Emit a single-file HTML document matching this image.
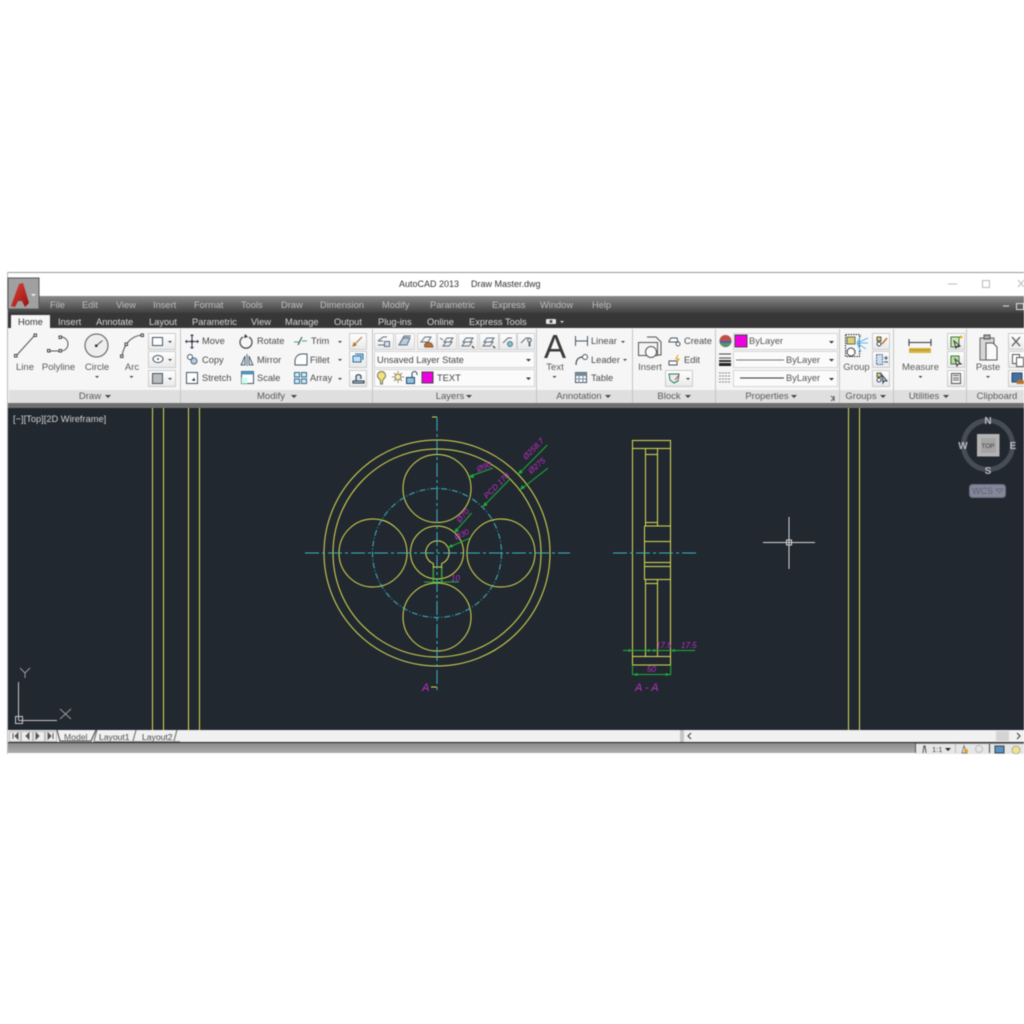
<!DOCTYPE html>
<html><head><meta charset="utf-8">
<style>
html,body{margin:0;padding:0;background:#fff;width:1024px;height:1024px;overflow:hidden}
svg{display:block;position:absolute;left:0;top:0;filter:blur(0.4px)}
text{font-family:"Liberation Sans",sans-serif;font-size:9.3px;fill:#4a4a4a}
.m text{fill:#bdbdbd}
.t text{fill:#d8d8d8}
.p text{fill:#5a5a5a;font-size:9.5px;text-anchor:middle}
.i{fill:none;stroke:#4a5560;stroke-width:1}
.y{fill:none;stroke:#dcdc50;stroke-width:1}
.c{fill:none;stroke:#3db4bd;stroke-width:1}
.g{fill:none;stroke:#1fae3c;stroke-width:1}
.d text{fill:#c22fc9;font-style:italic;font-size:8px}
</style></head><body>
<svg width="1024" height="1024" viewBox="0 0 1024 1024" xmlns="http://www.w3.org/2000/svg">
<defs>
<linearGradient id="mb" x1="0" y1="0" x2="0" y2="1"><stop offset="0" stop-color="#8a8a8a"/><stop offset="1" stop-color="#3a3a3a"/></linearGradient>
<linearGradient id="st" x1="0" y1="0" x2="0" y2="1"><stop offset="0" stop-color="#8a8a8a"/><stop offset="1" stop-color="#adadad"/></linearGradient>
<linearGradient id="btn" x1="0" y1="0" x2="0" y2="1"><stop offset="0" stop-color="#fff"/><stop offset="1" stop-color="#e9e9e9"/></linearGradient>
<linearGradient id="ar" x1="0" y1="0" x2="1" y2="1"><stop offset="0" stop-color="#e8403a"/><stop offset="1" stop-color="#8e1512"/></linearGradient>
</defs>
<!-- window -->
<rect x="7" y="272" width="1017" height="482" fill="#fff"/>
<rect x="7" y="272" width="1017" height="1" fill="#999"/>
<rect x="7" y="272" width="1" height="482" fill="#bbb"/>
<rect x="8" y="296" width="1016" height="18" fill="url(#mb)"/>
<rect x="8" y="313" width="1016" height="15" fill="#373737"/>
<rect x="8" y="328" width="1016" height="76" fill="#f6f6f6"/>
<rect x="9" y="390" width="1015" height="13" fill="#dfdfdf"/>
<rect x="8" y="403" width="1016" height="5" fill="#6e6e6e"/>
<rect x="8" y="408" width="1016" height="322" fill="#212830"/>
<rect x="8" y="730" width="1016" height="12" fill="#f1f1f1"/>
<rect x="8" y="742" width="1016" height="1" fill="#222"/>
<rect x="8" y="743" width="1016" height="10" fill="url(#st)"/>

<!-- app button -->
<rect x="8" y="278" width="31" height="31" fill="#a0a0a0" stroke="#555"/>
<path d="M11 306 L19 284 L23 283 L29 303 L25 307 L22 301 L18 301 L15 307Z" fill="url(#ar)"/>
<path d="M31 294h5l-2.500 2.500z" fill="#eee"/>

<!-- title -->
<text x="399" y="287" style="font-size:9px;fill:#333">AutoCAD 2013</text>
<text x="471" y="287" style="font-size:9px;fill:#333">Draw Master.dwg</text>
<path d="M948 284h9" stroke="#bbb" fill="none"/>
<rect x="982.500" y="280.500" width="7" height="7" fill="none" stroke="#bbb"/>
<path d="M1018 280l6 7M1024 280l-6 7" stroke="#bbb" fill="none"/>
<path d="M1003 306h6" stroke="#ddd"/>
<rect x="1016.500" y="303.500" width="7" height="6" fill="none" stroke="#ddd"/>

<!-- menu -->
<g class="m">
<text x="50" y="308">File</text><text x="82" y="308">Edit</text><text x="116" y="308">View</text><text x="153" y="308">Insert</text><text x="194" y="308">Format</text><text x="241" y="308">Tools</text><text x="281" y="308">Draw</text><text x="320" y="308">Dimension</text><text x="382" y="308">Modify</text><text x="430" y="308">Parametric</text><text x="492" y="308">Express</text><text x="540" y="308">Window</text><text x="592" y="308">Help</text>
</g>
<!-- tabs -->
<rect x="11" y="315" width="39" height="14" fill="#f6f6f6"/>
<text x="18" y="325" style="fill:#333">Home</text>
<g class="t">
<text x="58" y="325">Insert</text><text x="96" y="325">Annotate</text><text x="149" y="325">Layout</text><text x="192" y="325">Parametric</text><text x="251" y="325">View</text><text x="285" y="325">Manage</text><text x="334" y="325">Output</text><text x="378" y="325">Plug-ins</text><text x="427" y="325">Online</text><text x="469" y="325">Express Tools</text>
</g>
<rect x="546" y="319" width="10" height="5" rx="1" fill="#e6e6e6"/><circle cx="551" cy="321.500" r="1.500" fill="#444"/>
<path d="M560 321h4l-2 2z" fill="#ddd"/>

<!-- panel separators -->
<g fill="#c4c4c4">
<rect x="180" y="329" width="1" height="74"/><rect x="372" y="329" width="1" height="74"/><rect x="536" y="329" width="1" height="74"/><rect x="632" y="329" width="1" height="74"/><rect x="715" y="329" width="1" height="74"/><rect x="839" y="329" width="1" height="74"/><rect x="893" y="329" width="1" height="74"/><rect x="966" y="329" width="1" height="74"/>
</g>

<!-- Draw panel -->
<path class="i" d="M16 356L35 335" style="stroke:#555"/><rect x="14.500" y="354.500" width="2.500" height="2.500" fill="#fff" stroke="#444"/><rect x="34" y="334" width="2.500" height="2.500" fill="#fff" stroke="#444"/>
<path class="i" d="M49 351h12a7 7 0 0 0 0-14" style="stroke:#555"/><rect x="47.500" y="349.500" width="2.500" height="2.500" fill="#fff" stroke="#444"/><rect x="59" y="349.500" width="2.500" height="2.500" fill="#fff" stroke="#444"/><rect x="59" y="336" width="2.500" height="2.500" fill="#fff" stroke="#444"/>
<circle cx="96.500" cy="345.500" r="11.500" fill="#eee" stroke="#555"/><path d="M96.500 345.500l6-5" stroke="#555" fill="none"/><rect x="95" y="344.500" width="2.500" height="2.500" fill="#333"/>
<path class="i" d="M122 356C124 344 131 336 142 335" style="stroke:#555"/><rect x="120.500" y="355" width="2.500" height="2.500" fill="#fff" stroke="#444"/><rect x="141" y="334" width="2.500" height="2.500" fill="#fff" stroke="#444"/><rect x="125" y="343" width="2.500" height="2.500" fill="#fff" stroke="#444"/>
<g class="p"><text x="25" y="370">Line</text><text x="58.500" y="370">Polyline</text><text x="97" y="370">Circle</text><text x="132" y="370">Arc</text><text x="90" y="399">Draw</text></g>
<path d="M95 376h4l-2 2zM129.500 376h4l-2 2zM105 395h6l-3 3z" fill="#444"/>
<g fill="url(#btn)" stroke="#ccc"><rect x="148.500" y="333.500" width="27" height="16"/><rect x="148.500" y="351.500" width="27" height="16"/><rect x="148.500" y="370.500" width="27" height="16"/></g>
<rect x="152.500" y="337.500" width="10" height="8" fill="#fff" stroke="#456"/>
<ellipse cx="158" cy="359" rx="5" ry="3.500" fill="#fff" stroke="#456"/><circle cx="158" cy="359" r="1" fill="#456"/>
<rect x="152.500" y="373.500" width="10" height="10" fill="#bbb" stroke="#456"/>
<path d="M168 341h4l-2 2zM168 359h4l-2 2zM168 378h4l-2 2z" fill="#444"/>
<!-- Modify panel -->
<path d="M192 336v11M186.500 341.500h11" stroke="#334" fill="none"/><circle cx="192" cy="341.500" r="1.500" fill="#345"/><path d="M192 334l2 2h-4zM192 349l2-2h-4zM185 341.500l2-2v4zM199 341.500l-2-2v4z" fill="#334"/>
<circle cx="190" cy="357" r="2.500" fill="#fff" stroke="#456"/><circle cx="194" cy="361" r="3" fill="#bcd" stroke="#468"/>
<rect x="186.500" y="372.500" width="11" height="11" fill="#fff" stroke="#456"/><path d="M192 380l3 0m-1-2v3" stroke="#222" fill="none"/>
<path d="M243 337a6 6 0 1 0 6 0" fill="none" stroke="#444" stroke-width="1.200"/><path d="M245 334l3 3-4 1z" fill="#333"/>
<path d="M247 354v12M245 356l-4 9h4zM249 356l4 9h-4z" fill="#cfe0e8" stroke="#345" stroke-width=".8"/>
<rect x="241.500" y="371.500" width="12" height="12" fill="#fff" stroke="#456"/><rect x="241.500" y="371.500" width="12" height="3" fill="#4a98c0"/><rect x="241.500" y="377.500" width="6" height="6" fill="#cfe"/>
<path d="M294 342h5M302 341h5" stroke="#4a7" fill="none"/><path d="M298 345l4-8" stroke="#345" fill="none"/>
<path d="M295 365v-4a7 7 0 0 1 7-7h5v11z" fill="#fff" stroke="#456"/>
<g fill="#d8e8f0" stroke="#2c6a90"><rect x="294.500" y="372.500" width="5" height="4.500"/><rect x="301.500" y="372.500" width="5" height="4.500"/><rect x="294.500" y="379" width="5" height="4.500"/><rect x="301.500" y="379" width="5" height="4.500"/></g>
<g style="fill:#555"><text x="202" y="344">Move</text><text x="202" y="363">Copy</text><text x="202" y="381">Stretch</text><text x="257" y="344">Rotate</text><text x="257" y="363">Mirror</text><text x="257" y="381">Scale</text><text x="311" y="344">Trim</text><text x="310" y="363">Fillet</text><text x="310" y="381">Array</text></g>
<path d="M338 341h4l-2 2zM338 359h4l-2 2zM338 378h4l-2 2zM291 395h6l-3 3z" fill="#444"/>
<g class="p"><text x="271" y="399">Modify</text></g>
<g fill="url(#btn)" stroke="#ccc"><rect x="349.500" y="333.500" width="17" height="16"/><rect x="349.500" y="351.500" width="17" height="16"/><rect x="349.500" y="370.500" width="17" height="16"/></g>
<path d="M353 346l9-9M353 346l3-1-2-2z" stroke="#b07030" fill="#c33"/>
<path d="M353 356h8v6h-8zM355 354h8v6" fill="#cde" stroke="#2070a0"/>
<path d="M353 381h11v2h-11zM356 381v-5a3 3 0 0 1 5 0v3" fill="#cde" stroke="#234"/>

<!-- Layers panel -->
<g fill="url(#btn)" stroke="#d2d2d2">
<rect x="374.500" y="333.500" width="19" height="16"/><rect x="395.500" y="333.500" width="19" height="16"/><rect x="417.500" y="333.500" width="19" height="16"/><rect x="437.500" y="333.500" width="19" height="16"/><rect x="458.500" y="333.500" width="19" height="16"/><rect x="479.500" y="333.500" width="19" height="16"/><rect x="499.500" y="333.500" width="17" height="16"/><rect x="517.500" y="333.500" width="17" height="16"/>
</g>
<g fill="none" stroke="#5f6e7c">
<path d="M378 341l5-4h4M378 345h6M378 341h5"/><rect x="384.500" y="341.500" width="5" height="5" fill="#dde"/>
<path d="M399 345l4-7h7l-3 7zM400 343l4-7h7" fill="#bcd"/>
<path d="M421 342l4-5h6l-3 5z"/><path d="M425 347a4 3 0 0 1 7-3l1 3z" fill="#b8722c" stroke="#854"/>
<path d="M444 342l3-4h6l-3 4zM443 346l3-4h6l-3 4zM440 338l3 2" />
<path d="M463 342l3-4h7l-3 4zM462 346l3-4h7l-3 4z"/><path d="M472 346l2 2" stroke="#111"/>
<path d="M484 342l3-4h7l-3 4zM483 346l3-4h7l-3 4z"/><path d="M493 346l2 2" stroke="#111"/>
<path d="M503 343l5-5h4"/><circle cx="510" cy="344" r="2.500" fill="#7cc"/>
<path d="M521 343l5-5h4"/><path d="M529 342a2 2 0 1 1 1 0v4h-1z" fill="#ddd"/>
</g>
<rect x="374.500" y="351.500" width="160" height="16" fill="#fbfbfb" stroke="#d4d4d4"/>
<rect x="374.500" y="369.500" width="160" height="17" fill="#fbfbfb" stroke="#d4d4d4"/>
<text x="377" y="363" style="fill:#444">Unsaved Layer State</text>
<text x="437" y="381" style="fill:#444">TEXT</text>
<path d="M526 359h5l-2.500 2.500zM526 377.500h5l-2.500 2.500z" fill="#333"/>
<path d="M380.500 384v-3l-1-2a4 4 0 1 1 4 0l-1 2v3z" fill="#f3e27a" stroke="#776"/>
<circle cx="398" cy="377" r="3" fill="#f3eeb0" stroke="#875"/><path d="M398 371v2M398 381v2M392 377h2M402 377h2M394 373l1.500 1.500M402 373l-1.500 1.500M394 381l1.500-1.500M402 381l-1.500-1.500" stroke="#986" fill="none"/>
<rect x="406.500" y="377.500" width="8" height="6" fill="#8ec4e0" stroke="#246"/><path d="M412 377v-3a2.500 2.500 0 0 1 5 0v1" fill="none" stroke="#246"/>
<rect x="422" y="372" width="11" height="11" fill="#f000e0" stroke="#444"/>
<g class="p"><text x="450" y="399">Layers</text></g><path d="M466 395h6l-3 3z" fill="#444"/>

<!-- Annotation -->
<text x="544" y="358" style="font-size:33px;fill:#3a3a3a">A</text>
<g class="p"><text x="555" y="370">Text</text><text x="579" y="399">Annotation</text></g>
<path d="M552.500 376h4l-2 2zM605 395h6l-3 3zM621 341h4l-2 2zM623 359h4l-2 2z" fill="#444"/>
<path d="M575.500 336v10M587.500 336v10M576 341h11" stroke="#456" fill="none"/>
<path d="M576 365c0-6 3-8 7-8" stroke="#333" fill="none"/><circle cx="585" cy="357" r="2.500" fill="#fff" stroke="#456"/>
<rect x="575.500" y="372.500" width="11" height="10" fill="#fff" stroke="#456"/><path d="M575.500 375.500h11M575.500 379h11M579 375v8M583 375v8" stroke="#789" fill="none"/><rect x="575.500" y="372.500" width="11" height="2.500" fill="#789"/>
<g style="fill:#555"><text x="591" y="344">Linear</text><text x="591" y="363">Leader</text><text x="591" y="381">Table</text></g>

<!-- Block -->
<path d="M647 337h9l5 5v13h-5" fill="#f4f4f4" stroke="#555"/>
<rect x="638.500" y="342.500" width="19" height="13" fill="#f4f4f4" stroke="#555"/><circle cx="651" cy="352" r="5.500" fill="#fafafa" stroke="#555"/>
<path d="M669 341l2-3h6l1 4h-9z" fill="#fff" stroke="#456"/><circle cx="678" cy="344" r="2" fill="#fff" stroke="#456"/>
<path d="M669 361h8v4h-8z" fill="#fff" stroke="#456"/><path d="M678 355l-2 4h3l-2 3" stroke="#e0a010" fill="none"/>
<rect x="665.500" y="370.500" width="27" height="16" fill="url(#btn)" stroke="#ccc"/>
<path d="M669 374h10l-1 7-4 2-4-3z" fill="#e8eef0" stroke="#2a7a5a"/><path d="M675 380l4-5" stroke="#c33" fill="none"/><path d="M686 378h4l-2 2zM685 395h6l-3 3z" fill="#444"/>
<g style="fill:#555"><text x="684" y="344">Create</text><text x="684" y="363">Edit</text></g>
<g class="p"><text x="650" y="370">Insert</text><text x="669" y="399">Block</text></g>

<!-- Properties -->
<circle cx="725.500" cy="341" r="6" fill="#d8a040"/><path d="M719.500 341a6 6 0 0 1 12 0z" fill="#c0504a"/><path d="M719.500 341a6 6 0 0 0 12 0z" fill="#4a60b8"/><path d="M720 343h11l-2 3h-7z" fill="#5a9a50"/>
<rect x="733.500" y="333.500" width="104" height="16" fill="#fbfbfb" stroke="#d6d6d6"/>
<rect x="733.500" y="351.500" width="104" height="16" fill="#fbfbfb" stroke="#d6d6d6"/>
<rect x="733.500" y="370.500" width="104" height="16" fill="#fbfbfb" stroke="#d6d6d6"/>
<rect x="735" y="335" width="12" height="12" fill="#f000e0" stroke="#444"/>
<text x="749" y="344" style="fill:#555">ByLayer</text>
<path d="M736 360h48" stroke="#777" fill="none"/><text x="786" y="363" style="fill:#555">ByLayer</text>
<path d="M740 378h44" stroke="#333" fill="none"/><text x="786" y="381" style="fill:#555">ByLayer</text>
<path d="M829 341h5l-2.500 2.500zM829 359h5l-2.500 2.500zM829 378h5l-2.500 2.500z" fill="#333"/>
<path d="M719 354h12M719 358h12" stroke="#444" fill="none"/><rect x="719" y="360" width="12" height="2" fill="#333"/><rect x="719" y="363" width="12" height="3" fill="#222"/>
<path d="M719 373h12M719 376h12M719 379h12M719 382h12" stroke="#888" stroke-dasharray="2 1" fill="none"/>
<g class="p"><text x="767" y="399">Properties</text></g><path d="M791 395h6l-3 3z" fill="#444"/>
<path d="M831 396l3 2.500-3 2.500M834 396l0 5" stroke="#555" fill="none"/>

<!-- Groups -->
<rect x="845.500" y="334.500" width="14" height="22" fill="none" stroke="#222" stroke-dasharray="1.500 1"/>
<rect x="847" y="337" width="8" height="7" fill="#d8d070" stroke="#666"/><circle cx="851" cy="352" r="4" fill="#fff" stroke="#334"/>
<path d="M857 343l11-5M857 343l9 6M857 343l4-8M857 343l4 9M857 343h11" stroke="#60b8e8" fill="none"/>
<g fill="url(#btn)" stroke="#ccc"><rect x="872.500" y="333.500" width="17" height="16"/><rect x="872.500" y="351.500" width="17" height="16"/><rect x="872.500" y="370.500" width="17" height="16"/></g>
<rect x="877" y="337" width="4" height="4" fill="#d8d070" stroke="#555"/><circle cx="879" cy="344" r="2" fill="#fff" stroke="#345"/><path d="M882 344l5-6" stroke="#c07020" stroke-width="1.500"/>
<rect x="876.500" y="354.500" width="6" height="10" fill="#cde" stroke="#357" stroke-dasharray="1.500 1"/><path d="M884 358h4M886 356v4M884 362h4" stroke="#357"/>
<rect x="877" y="373" width="4" height="4" fill="#d8d070" stroke="#555"/><circle cx="879" cy="380" r="2" fill="#fff" stroke="#345"/><path d="M882 375l5 6-3 0-1 2z" fill="#bcd" stroke="#345"/>
<g class="p"><text x="856.500" y="370">Group</text><text x="861" y="399">Groups</text></g><path d="M880 395h6l-3 3z" fill="#444"/>

<!-- Utilities -->
<path d="M909 339v7M931 339v7M909 342.500h22" stroke="#333" fill="none"/>
<rect x="909" y="348" width="22" height="5" fill="#d8b440"/><path d="M910 350h20" stroke="#8a7020" stroke-dasharray="1 1" fill="none"/>
<g fill="url(#btn)" stroke="#ccc"><rect x="947.500" y="333.500" width="17" height="16"/><rect x="947.500" y="351.500" width="17" height="16"/><rect x="947.500" y="370.500" width="17" height="16"/></g>
<path d="M951 337h8v10h-8z" fill="#cfe6b8" stroke="#3a7a3a"/><path d="M954 341l6 5-3 0-1 2z" fill="#fff" stroke="#333"/><circle cx="961" cy="337" r="1.500" fill="#e0b020"/>
<path d="M951 356h8v8h-8z" fill="#bcdca8" stroke="#3a7a3a"/><path d="M955 359l6 5-3 0-1 2z" fill="#fff" stroke="#333"/>
<rect x="951.500" y="373.500" width="9" height="10" fill="#f4f4f4" stroke="#555"/><path d="M953 375.500h6M953 378h6M953 380h6" stroke="#666" fill="none"/>
<g class="p"><text x="920.500" y="370">Measure</text><text x="924" y="399">Utilities</text></g><path d="M918.500 376h4l-2 2zM943 395h6l-3 3z" fill="#444"/>

<!-- Clipboard -->
<path d="M980 338h14v22h-14z" fill="#d6d6d6" stroke="#666"/><rect x="984" y="335" width="6" height="4" fill="#aaa" stroke="#555"/>
<path d="M986 343h7l4 4v13h-11z" fill="#fafafa" stroke="#555"/>
<g fill="url(#btn)" stroke="#ccc"><rect x="1008.500" y="333.500" width="17" height="16"/><rect x="1008.500" y="351.500" width="17" height="16"/><rect x="1008.500" y="370.500" width="17" height="16"/></g>
<path d="M1012 337l8 9M1020 337l-8 9" stroke="#555" stroke-width="1.300" fill="none"/>
<rect x="1012.500" y="354.500" width="7" height="9" fill="#fff" stroke="#555"/><rect x="1016.500" y="357.500" width="7" height="9" fill="#fff" stroke="#555"/>
<rect x="1012" y="373" width="10" height="9" fill="#4070a8" stroke="#345"/><path d="M1017 384a4 3 0 0 1 7-3v3z" fill="#b8722c"/>
<g class="p"><text x="988" y="370">Paste</text><text x="997" y="399">Clipboard</text></g><path d="M986 376h4l-2 2z" fill="#444"/>

<!-- Canvas content -->
<text x="13" y="422" style="fill:#d4d4d4;font-size:9.300px">[−][Top][2D Wireframe]</text>
<g class="y">
<path d="M152.500 408v322M163.500 408v322M188.500 408v322M199.500 408v322M848.500 408v322M859.500 408v322"/>
<circle cx="437" cy="553" r="113"/><circle cx="437" cy="553" r="104"/>
<circle cx="437" cy="488.500" r="34"/><circle cx="437" cy="617" r="34"/><circle cx="373" cy="553" r="34"/><circle cx="501" cy="553" r="34"/>
<circle cx="437" cy="552.500" r="26.500"/>
<path d="M433.300 563.500a11.700 11.700 0 1 1 8.400 0"/>
<path d="M433.300 563v18.700M441.700 563v18.700M433.300 567h8.400"/>
<path d="M437 417h-5M437 687h-6"/>
<!-- side view -->
<path d="M632.500 440.500h38v224.500h-38zM632.500 448.500h38M632.500 656.500h38"/>
<path d="M645.500 448.500v77M657.500 448.500v77M645.500 454.500h12M645.500 522.500h12M645.500 579v77M657.500 579v77M645.500 583.500h12"/>
<path d="M644.500 526h26M644.500 526v53.500h26M644.500 541.500h26M644.500 562.500h26M644.500 566.500h26"/>
</g>
<g class="c">
<circle cx="437" cy="553" r="64.500" stroke-dasharray="6 2 1 2"/>
<path d="M437 417V690" stroke-dasharray="14 3 3 3"/>
<path d="M305 553H570" stroke-dasharray="14 3 3 3"/>
<path d="M613 553H697" stroke-dasharray="14 3 3 3"/>
</g>
<g class="g">
<path d="M547.300 445L518.300 474.300M548 468L520 490M510 479L482.700 507M493 468L468 477M471.700 513L454 533M470.700 537.700L447.300 548M424 582H459M433.300 568V582M441.700 568V582"/>
<path d="M623 650.500H695M632.500 665V675M670.700 665V675M632.500 674.500H670.700"/>
</g>
<g fill="#1fae3c">
<path d="M518 474.500l2-5 3 3zM520 490l2-5 3 3zM482.700 507l2-5 3 3zM468 477l5-3 1 4zM454 533l2-5 3 3zM447.300 548l4-4 2 3zM632.500 674.500l5-1.500v3zM670.700 674.500l-5-1.500v3zM632.500 650.500l-4-1.500v3zM645.500 650.500l4-1.500v3zM657.500 650.500l-4-1.500v3zM670.700 650.500l4-1.500v3z"/>
</g>
<g class="d">
<text transform="translate(526 460) rotate(-45)">Ø258.7</text>
<text transform="translate(531 474) rotate(-40)">Ø275</text>
<text transform="translate(487 499) rotate(-45)">PCD 170</text>
<text transform="translate(478 472) rotate(-22)">Ø90</text>
<text transform="translate(460 523) rotate(-50)">Ø70</text>
<text transform="translate(456 540) rotate(-25)">Ø30</text>
<text x="451" y="581" >10</text>
<text x="656" y="648">17.5</text>
<text x="681" y="648">17.5</text>
<text x="647" y="672">50</text>
<text x="422" y="691" style="font-size:11px">A</text>
<text x="635" y="691" style="font-size:11px">A - A</text>
</g>

<!-- crosshair -->
<path d="M763 542.500H815M789 517V569" stroke="#d8d8d8" fill="none"/>
<rect x="786.500" y="540" width="5" height="5" fill="none" stroke="#d8d8d8"/>

<!-- UCS -->
<path d="M18.500 682V720M18.500 720.500H57" stroke="#c8c8c8" fill="none"/>
<rect x="15.500" y="716.500" width="7" height="7" fill="none" stroke="#c8c8c8"/>
<path d="M60 709l11 10M71 709l-11 10M20 668l5 5 5-5M25 673v5" stroke="#9a9a9a" fill="none"/>

<!-- ViewCube -->
<circle cx="988" cy="445" r="24.500" fill="none" stroke="#474d57" stroke-width="5"/>
<rect x="977" y="434" width="22.500" height="22.500" fill="#b4b4b4"/>
<rect x="981" y="438" width="15" height="15" fill="#a4a4a4"/>
<text x="988" y="448" style="font-size:6.500px;fill:#444;text-anchor:middle">TOP</text>
<g style="text-anchor:middle"><text x="988" y="424" style="font-weight:bold;font-size:10px;fill:#b8bcc2">N</text><text x="988" y="474" style="font-weight:bold;font-size:10px;fill:#b8bcc2">S</text><text x="963" y="449" style="font-weight:bold;font-size:10px;fill:#b8bcc2">W</text><text x="1013" y="449" style="font-weight:bold;font-size:10px;fill:#b8bcc2">E</text></g>
<rect x="969.500" y="484.500" width="36" height="13" rx="3" fill="#83879a" stroke="#6a6e7c"/>
<text x="972" y="494" style="font-size:9px;fill:#5e6270">WCS</text>
<path d="M996 489h7l-3.500 4z" fill="none" stroke="#6a6e7c"/>

<!-- layout tabs -->
<g stroke="#bbb" fill="#eee"><rect x="9.500" y="731.500" width="11" height="10"/><rect x="21.500" y="731.500" width="11" height="10"/><rect x="33.500" y="731.500" width="11" height="10"/><rect x="45.500" y="731.500" width="11" height="10"/></g>
<path d="M13 733v6M18 733l-3 3 3 3zM29 733l-3 3 3 3zM36 733l3 3-3 3zM48 733l3 3-3 3zM53 733v6" stroke="#555" fill="#555"/>
<path d="M57 730l3 11h31l5-11" fill="#f1f1f1" stroke="#444"/>
<text x="64" y="740" style="fill:#555;font-size:8.600px">Model</text>
<path d="M94 741l3-11M133 741l3-11M174 741l3-11" stroke="#666" fill="none"/>
<text x="99" y="740" style="fill:#444;font-size:8.600px">Layout1</text>
<text x="142" y="740" style="fill:#444;font-size:8.600px">Layout2</text>
<path d="M94 741.500h86" stroke="#999" fill="none"/>
<rect x="680" y="730" width="4" height="12" fill="#c4c4c4"/>
<path d="M691 733l-3 3 3 3M1017 733l3 3-3 3" stroke="#333" fill="none"/>
<rect x="996" y="731" width="13" height="10" fill="#d4d4d4"/>

<!-- status -->
<rect x="916" y="744" width="108" height="10" fill="#e6e6e6"/>
<rect x="915" y="743" width="1" height="10" fill="#555"/>
<path d="M923 753l1-7h1l1 7" stroke="#444" fill="#fff"/>
<text x="932" y="752" style="font-size:7.500px;fill:#444">1:1</text>
<path d="M945 748h6l-3 3z" fill="#222"/>
<rect x="955" y="744" width="1" height="9" fill="#bbb"/>
<path d="M962 753l2-7 3 7z" fill="#fff" stroke="#777"/><circle cx="966" cy="751" r="2" fill="#e0a020"/>
<circle cx="979" cy="749" r="3.500" fill="none" stroke="#bbb"/>
<rect x="989" y="744" width="1" height="9" fill="#444"/>
<rect x="995" y="746" width="9" height="7" fill="#5a90c0" stroke="#345"/>
<circle cx="1016" cy="750" r="4" fill="#f0e090" stroke="#aa9"/>
<rect x="0" y="754" width="1024" height="270" fill="#fff"/>
</svg>
</body></html>
